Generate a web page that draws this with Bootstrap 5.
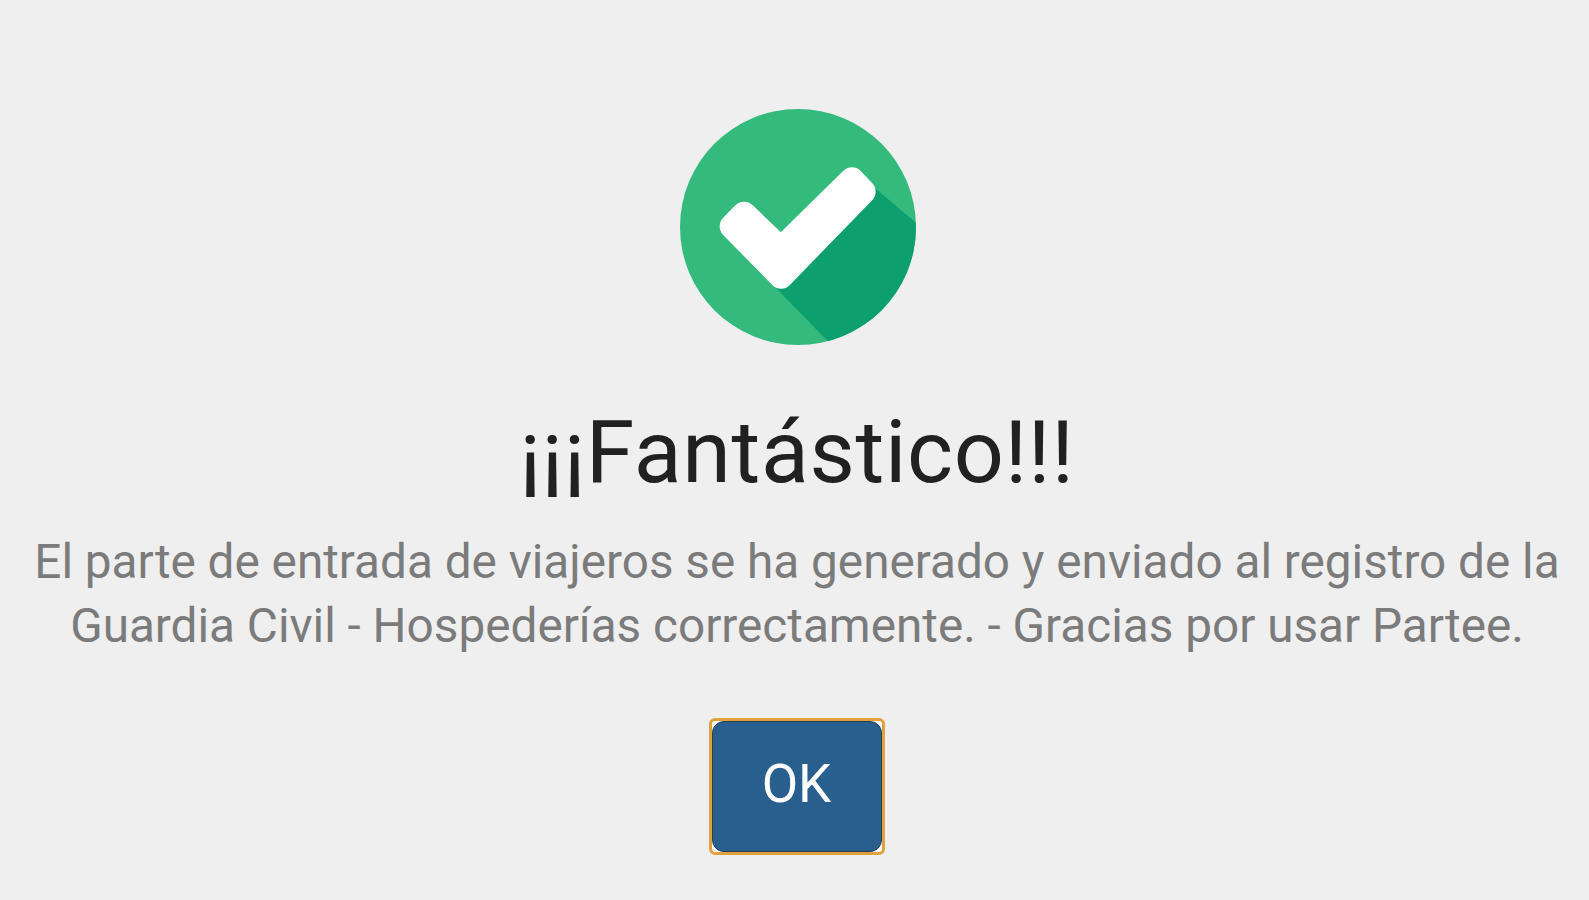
<!DOCTYPE html>
<html lang="es">
<head>
<meta charset="utf-8">
<meta name="viewport" content="width=device-width, initial-scale=1">
<title>Fantástico</title>
<link href="https://cdn.jsdelivr.net/npm/bootstrap@5.3.0/dist/css/bootstrap.min.css" rel="stylesheet">
<style>
body { background: #efefef; font-family: Roboto, sans-serif; height: 900px; overflow: hidden; }
.result-icon { width: 236px; height: 236px; margin: 109px 0 0 7px; }
.result-title { font-size: 88px; line-height: 100px; letter-spacing: .65px; color: #212121; margin: 57px 0 0 5px; white-space: nowrap; }
.result-text { font-size: 47.7px; line-height: 63.5px; color: #7b7b7b; margin: 29px 0 0 5px; white-space: nowrap; }
.btn-ok, .btn-ok:hover { width: 170px; height: 131px; font-size: 53px; line-height: 1; color: #fff; background: #285f8f; border: 1px solid #263f50; border-radius: 12px; padding: 0 0 4px; }
.ok-ring { background: #fafafa; border: 3px solid #dfa23c; border-radius: 6px; margin: 60px 0 0 4px; }
</style>
</head>
<body>
<main class="d-flex flex-column align-items-center text-center">
  <svg class="result-icon flex-shrink-0" viewBox="30 29 708 708" aria-hidden="true">
    <defs><clipPath id="disc"><circle cx="384" cy="383" r="354"/></clipPath></defs>
    <circle cx="384" cy="383" r="354" fill="#35ba7e"/>
    <path clip-path="url(#disc)" fill="#0da06e" d="M612 264L745 376V745H492L318 566Z"/>
    <path fill="#fff" stroke="#fff" stroke-width="74" stroke-linejoin="round" d="M222 344L186 381L333 531L580 277L546 241L333 450Z"/>
  </svg>
  <h1 class="result-title fw-normal mb-0">¡¡¡Fantástico!!!</h1>
  <p class="result-text mb-0">El parte de entrada de viajeros se ha generado y enviado al registro de la<br>Guardia Civil - Hospederías correctamente. - Gracias por usar Partee.</p>
  <div class="ok-ring d-flex"><button type="button" class="btn btn-ok">OK</button></div>
</main>
<script src="https://cdn.jsdelivr.net/npm/bootstrap@5.3.0/dist/js/bootstrap.bundle.min.js"></script>
</body>
</html>
